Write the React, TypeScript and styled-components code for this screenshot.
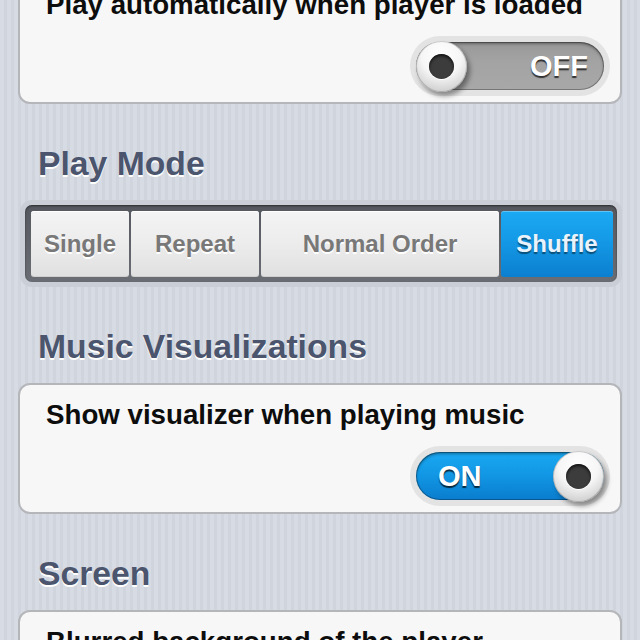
import React from "react";
import styled, { createGlobalStyle } from "styled-components";

const Global = createGlobalStyle`
  html, body {
    margin: 0;
    padding: 0;
    width: 640px;
    height: 640px;
    overflow: hidden;
  }
  body {
    font-family: "Liberation Sans", Arial, sans-serif;
    background: repeating-linear-gradient(
      90deg,
      #d7dbe3 0px,
      #d7dbe3 4px,
      #d0d4dd 4px,
      #d0d4dd 7px
    );
  }
`;

const Page = styled.div`
  width: 640px;
  height: 640px;
  box-sizing: border-box;
  padding: 0 18px;
  display: flex;
  flex-direction: column;
`;

const Card = styled.div<{ $first?: boolean }>`
  margin-top: ${(p) => (p.$first ? "-27px" : "0")};
  background: #f7f7f7;
  border: 2px solid #b4b6ba;
  border-radius: 12px;
  padding: 14px 10px 6px 26px;
  display: flex;
  flex-direction: column;
  flex-shrink: 0;
`;

const CardText = styled.div`
  font-size: 27.7px;
  font-weight: 700;
  line-height: 32px;
  color: #0d0d0d;
  white-space: nowrap;
`;

const ToggleRow = styled.div`
  margin-top: 15px;
  display: flex;
  justify-content: flex-end;
`;

const Heading = styled.div`
  margin-top: 39px;
  padding-left: 20px;
  height: 40px;
  line-height: 40px;
  font-size: 33.7px;
  font-weight: 700;
  color: #4b556d;
  text-shadow: 0 1.5px 0 #ffffff;
  margin-bottom: 17px;
  flex-shrink: 0;
`;

const ToggleHalo = styled.div`
  width: 200px;
  height: 60px;
  box-sizing: border-box;
  padding: 6px;
  border-radius: 30px;
  background: #e3e3e3;
`;

const Track = styled.div<{ $on: boolean }>`
  position: relative;
  height: 48px;
  border-radius: 24px;
  box-sizing: border-box;
  display: flex;
  align-items: center;
  justify-content: ${(p) => (p.$on ? "flex-start" : "flex-end")};
  padding: ${(p) => (p.$on ? "0 0 0 22px" : "0 16px 0 0")};
  background: ${(p) =>
    p.$on
      ? "linear-gradient(180deg, #1aa8f2 0%, #1196e4 50%, #0a7ccd 100%)"
      : "linear-gradient(180deg, #989898 0%, #a3a3a3 40%, #a8a8a8 100%)"};
  box-shadow: inset 0 2px 3px rgba(0, 0, 0, 0.35),
    inset 0 0 0 1px rgba(0, 0, 0, 0.28);
`;

const ToggleLabel = styled.span`
  font-size: 29px;
  font-weight: 700;
  color: #ffffff;
  text-shadow: 0 2px 1px rgba(0, 0, 0, 0.7);
`;

const Knob = styled.div<{ $on: boolean }>`
  position: absolute;
  top: -1.5px;
  ${(p) => (p.$on ? "right: 0px;" : "left: 0px;")}
  width: 51px;
  height: 51px;
  border-radius: 50%;
  display: flex;
  align-items: center;
  justify-content: center;
  background: radial-gradient(
    circle at 50% 30%,
    #ffffff 0%,
    #f6f6f6 45%,
    #d6d6d6 75%,
    #b8b8b8 100%
  );
  box-shadow: 3px 4px 5px rgba(0, 0, 0, 0.4),
    inset 0 0 0 1px rgba(0, 0, 0, 0.18);
`;

const KnobDot = styled.div`
  width: 25px;
  height: 25px;
  border-radius: 50%;
  background: #3c3c3c;
  box-shadow: inset 0 2px 3px rgba(0, 0, 0, 0.7),
    0 1px 0 rgba(255, 255, 255, 0.9);
`;

const SegHalo = styled.div`
  margin: 0 0 0 2px;
  width: 602px;
  box-sizing: border-box;
  padding: 5px;
  border-radius: 12px;
  background: #c9ced7;
  flex-shrink: 0;
`;

const SegFrame = styled.div`
  background: linear-gradient(180deg, #55585e 0%, #6a6d73 100%);
  border-radius: 7px;
  padding: 6px 4px 5px 6px;
  display: grid;
  grid-template-columns: 98px 128px 238px 112px;
  column-gap: 2px;
  box-shadow: inset 0 1px 2px rgba(0, 0, 0, 0.5);
`;

const Segment = styled.div<{ $active?: boolean }>`
  height: 66px;
  border-radius: 3px;
  display: flex;
  align-items: center;
  justify-content: center;
  font-size: 24px;
  font-weight: 700;
  white-space: nowrap;
  background: ${(p) =>
    p.$active
      ? "linear-gradient(180deg, #1ca9f3 0%, #1499e6 45%, #0b7fd0 100%)"
      : "linear-gradient(180deg, #f4f4f4 0%, #ececec 50%, #e0e0e0 100%)"};
  color: ${(p) => (p.$active ? "#eaf3fb" : "#787878")};
  text-shadow: ${(p) =>
    p.$active ? "0 2px 1px rgba(0, 0, 0, 0.45)" : "0 1.5px 0 #ffffff"};
  box-shadow: ${(p) =>
    p.$active
      ? "inset 0 1px 0 rgba(255,255,255,0.3)"
      : "inset 0 1px 0 #ffffff, inset 0 -1px 0 rgba(0,0,0,0.08)"};
`;

const Toggle: React.FC<{ on: boolean }> = ({ on }) => (
  <ToggleHalo>
    <Track $on={on}>
      <ToggleLabel>{on ? "ON" : "OFF"}</ToggleLabel>
      <Knob $on={on}>
        <KnobDot />
      </Knob>
    </Track>
  </ToggleHalo>
);

const modes = ["Single", "Repeat", "Normal Order", "Shuffle"];

export default function App() {
  return (
    <>
      <Global />
      <Page>
        <Card $first>
          <CardText>Play automatically when player is loaded</CardText>
          <ToggleRow>
            <Toggle on={false} />
          </ToggleRow>
        </Card>

        <Heading>Play Mode</Heading>
        <SegHalo>
          <SegFrame>
            {modes.map((m) => (
              <Segment key={m} $active={m === "Shuffle"}>
                {m}
              </Segment>
            ))}
          </SegFrame>
        </SegHalo>

        <Heading>Music Visualizations</Heading>
        <Card>
          <CardText>Show visualizer when playing music</CardText>
          <ToggleRow>
            <Toggle on={true} />
          </ToggleRow>
        </Card>

        <Heading>Screen</Heading>
        <Card>
          <CardText>Blurred background of the player</CardText>
          <ToggleRow>
            <Toggle on={true} />
          </ToggleRow>
        </Card>
      </Page>
    </>
  );
}
